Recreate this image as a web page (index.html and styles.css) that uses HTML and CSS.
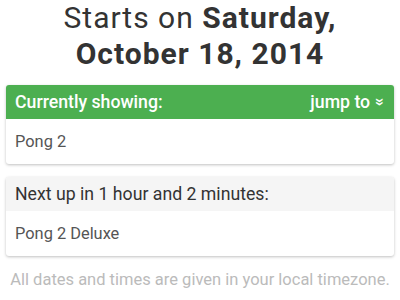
FILE: index.html
```html
<!DOCTYPE html>
<html lang="en">
<head>
    <meta charset="UTF-8">
    <title>Schedule</title>
    <link rel="stylesheet" href="styles.css">
</head>
<body>
    <div class="page">
        <h1 class="start">Starts on <strong>Saturday,<br>October 18, 2014</strong></h1>

        <div class="card">
            <div class="card-head green">
                <span>Currently showing:</span>
                <a class="jump">jump to <span class="chev">&#xbb;</span></a>
            </div>
            <div class="card-body">Pong 2</div>
        </div>

        <div class="card">
            <div class="card-head">Next up in 1 hour and 2 minutes:</div>
            <div class="card-body">Pong 2 Deluxe</div>
        </div>

        <p class="note">All dates and times are given in your local timezone.</p>
    </div>
</body>
</html>
```

FILE: styles.css
```css
body {
    margin: 0;
    background-color: #fff;
    color: #333;
    font-family: Roboto, "Noto Sans", sans-serif;
}
.page {
    padding: 0 6px;
}
.start {
    margin: 0;
    font-size: 30px;
    line-height: 35.5px;
    letter-spacing: 1px;
    font-weight: 400;
    text-align: center;
    color: #333;
}
.start strong {
    font-weight: 700;
}
.card {
    margin-top: 14px;
    background-color: #fff;
    border-radius: 3px;
    box-shadow: 0 1px 3px rgba(0, 0, 0, 0.25);
    overflow: hidden;
}
.card + .card {
    margin-top: 13px;
}
.card-head {
    display: flex;
    justify-content: space-between;
    align-items: center;
    height: 34px;
    padding: 0 9px;
    font-size: 17.7px;
    background-color: #f5f5f5;
    color: #333;
}
.card-head.green {
    background-color: #4caf50;
    color: #fff;
    font-weight: 500;
}
.jump {
    color: #fff;
}
.chev {
    display: inline-block;
    margin-left: 2px;
    transform: rotate(90deg);
    font-size: 17px;
    font-weight: 700;
}
.card-body {
    height: 45px;
    line-height: 45px;
    padding: 0 9px;
    font-size: 16.4px;
    color: #555;
}
.note {
    margin: 14px 0 0;
    text-align: center;
    font-size: 16.5px;
    color: #bbb;
}
```
